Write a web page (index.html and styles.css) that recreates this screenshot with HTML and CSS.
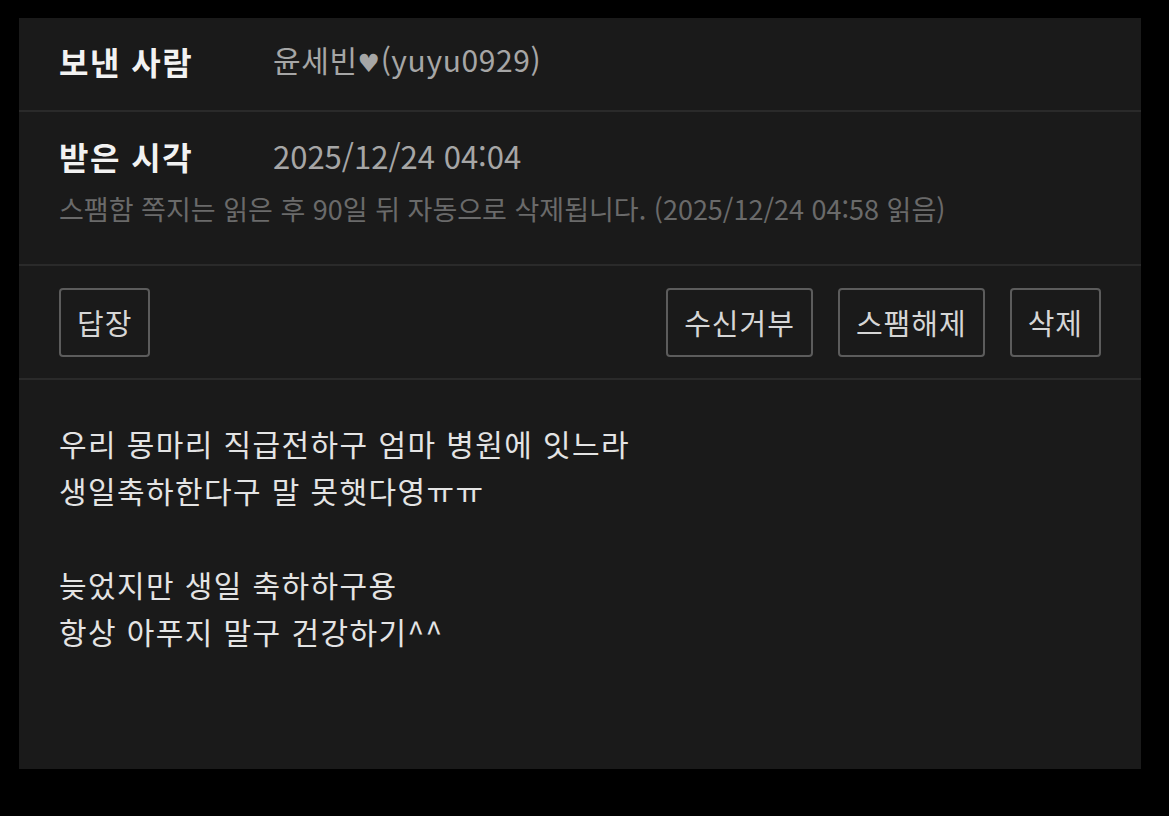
FILE: index.html
```html
<!DOCTYPE html>
<html lang="ko">
<head>
<meta charset="utf-8">
<title>쪽지</title>
<link rel="stylesheet" href="styles.css">
</head>
<body>
<div class="panel">
  <div class="row row-sender">
    <div class="label">보낸 사람</div>
    <div class="value">윤세빈<span class="heart">♥</span>(yuyu0929)</div>
  </div>
  <div class="row-time">
    <div class="line">
      <div class="label">받은 시각</div>
      <div class="value date">2025/12/24 04:04</div>
    </div>
    <div class="note">스팸함 쪽지는 읽은 후 90일 뒤 자동으로 삭제됩니다. (2025/12/24 04:58 읽음)</div>
  </div>
  <div class="actions">
    <button class="btn">답장</button>
    <div class="spacer"></div>
    <button class="btn">수신거부</button>
    <button class="btn">스팸해제</button>
    <button class="btn">삭제</button>
  </div>
  <div class="message">
    <p>우리 몽마리 직급전하구 엄마 병원에 잇느라<br>생일축하한다구 말 못햇다영ㅠㅠ</p>
    <p>늦었지만 생일 축하하구용<br>항상 아푸지 말구 건강하기^^</p>
  </div>
</div>
</body>
</html>
```

FILE: styles.css
```css
html, body {
  margin: 0;
  padding: 0;
  background: #000;
}
body {
  font-family: "Noto Sans CJK KR", "Noto Sans", sans-serif;
  padding: 18px 0 0 19px;
  height: 816px;
  box-sizing: border-box;
}
.panel {
  width: 1122px;
  height: 751px;
  background: #1a1a1a;
  display: flex;
  flex-direction: column;
}
.row {
  display: flex;
  align-items: center;
  padding: 0 40px;
}
.row-sender {
  height: 94px;
  box-sizing: border-box;
  padding-bottom: 6px;
  border-bottom: 2px solid #2a2a2a;
}
.label {
  width: 214px;
  flex: none;
  color: #f2f2f2;
  font-weight: 700;
  font-size: 32px;
  letter-spacing: 1.5px;
  line-height: 44px;
}
.value {
  color: #a6a6a6;
  font-size: 30px;
  letter-spacing: 0.6px;
  line-height: 44px;
}
.heart {
  font-family: "DejaVu Sans", sans-serif;
  font-size: 25px;
}
.date {
  font-size: 31px;
  letter-spacing: 0;
}
.row-time {
  padding: 22px 40px 37px;
  border-bottom: 2px solid #2a2a2a;
}
.line {
  display: flex;
  align-items: center;
}
.note {
  margin-top: 13px;
  color: #6a6a6a;
  font-size: 27px;
  line-height: 36px;
  white-space: nowrap;
}
.actions {
  display: flex;
  align-items: center;
  gap: 25px;
  padding: 22px 40px 21px;
  border-bottom: 2px solid #2a2a2a;
}
.spacer {
  flex: 1;
}
.btn {
  height: 69px;
  padding: 0 16px;
  background: transparent;
  border: 2px solid #5c5c5c;
  border-radius: 4px;
  color: #d6d6d6;
  font-family: "Noto Sans CJK KR", "Noto Sans", sans-serif;
  font-size: 29px;
  letter-spacing: 1px;
  line-height: 1;
}
.message {
  padding: 40px 40px 0;
  color: #e4e4e4;
  font-size: 30px;
  letter-spacing: 1.4px;
  line-height: 47px;
}
.message p {
  margin: 0 0 47px;
}
```
